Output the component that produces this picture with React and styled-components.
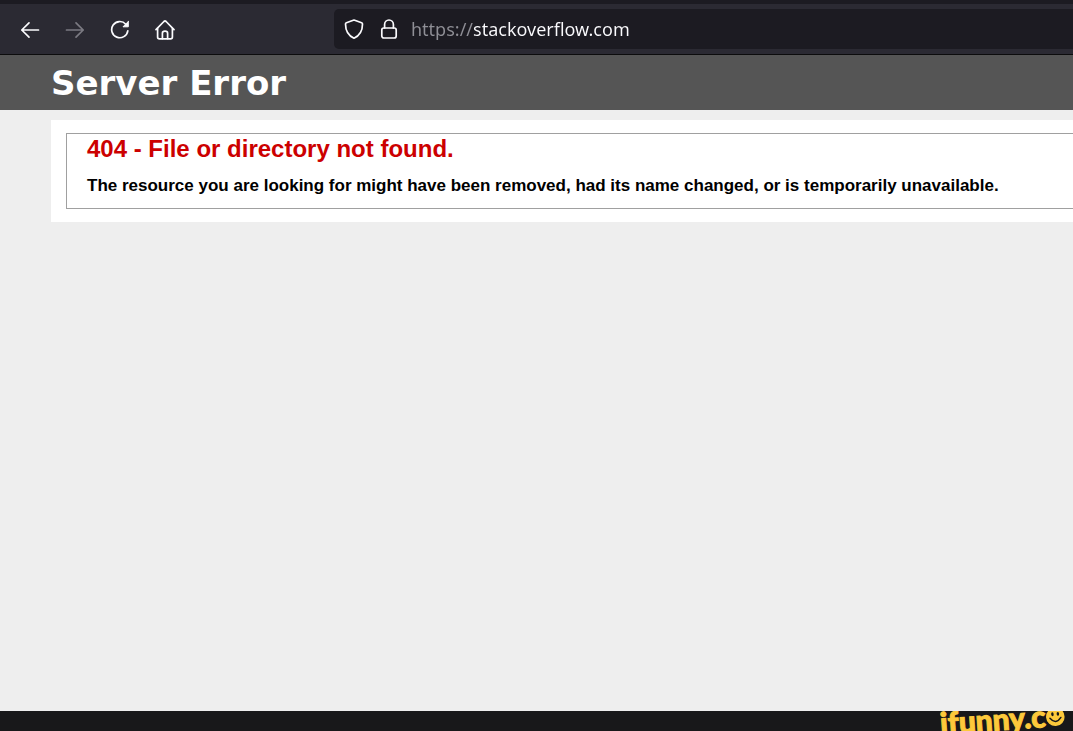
import React from "react";
import styled, { createGlobalStyle } from "styled-components";

const COLORS = {
  tabStrip: "#1c1b22",
  toolbar: "#2b2a33",
  field: "#1c1b22",
  icon: "#fbfbfe",
  header: "#555555",
  page: "#eeeeee",
  error: "#cc0000",
  footer: "#18181a",
  brand: "#fdc93b",
};

const GlobalStyle = createGlobalStyle`
  * {
    box-sizing: border-box;
  }

  body {
    margin: 0;
    background-color: ${COLORS.page};
    font-family: "Liberation Sans", Arial, sans-serif;
  }
`;

const Window = styled.div`
  display: flex;
  flex-direction: column;
  min-height: 100vh;
  overflow: hidden;
`;

const Toolbar = styled.nav`
  display: flex;
  align-items: center;
  padding: 5px 0 5px 7px;
  background-color: ${COLORS.toolbar};
  border-top: 4px solid ${COLORS.tabStrip};
  border-bottom: 1px solid #0c0c0d;
`;

const NavButton = styled.button`
  display: flex;
  align-items: center;
  justify-content: center;
  width: 45px;
  height: 40px;
  padding: 1px 0 0;
  border: none;
  background: none;
  color: ${COLORS.icon};

  &:disabled {
    color: #7b7a82;
  }
`;

const AddressBar = styled.label`
  display: flex;
  align-items: center;
  flex: 1;
  height: 40px;
  margin-left: 147px;
  padding-left: 10px;
  background-color: ${COLORS.field};
  border-radius: 5px 0 0 5px;
  color: ${COLORS.icon};
`;

const Icon = styled.svg`
  display: block;
  flex: none;
  width: 20px;
  height: 20px;
  margin-right: ${(props) => props.$gap || 0}px;
  fill: none;
  stroke: currentColor;
  stroke-width: 1.7;
  stroke-linecap: round;
  stroke-linejoin: round;
`;

/* the protocol is dimmed, the host name is bright */
const AddressInput = styled.input`
  flex: 1;
  min-width: 0;
  height: 28px;
  padding: 0;
  border: none;
  outline: none;
  font-family: "Noto Sans", sans-serif;
  font-size: 18px;
  color: transparent;
  background: linear-gradient(to right, #8f8f96 62px, ${COLORS.icon} 62px);
  background-clip: text;
  -webkit-background-clip: text;
`;

const Header = styled.header`
  padding: 9px 51px 7px;
  background-color: ${COLORS.header};
`;

const Title = styled.h1`
  margin: 0;
  font-family: "DejaVu Sans", Verdana, sans-serif;
  font-size: 34px;
  line-height: 39px;
  color: #ffffff;
`;

const Content = styled.main`
  flex: 1;
  padding: 10px 0 10px 51px;
`;

const Card = styled.div`
  padding: 13px 0 13px 15px;
  background-color: #ffffff;
`;

const Message = styled.section`
  padding: 0 0 11px 20px;
  border: 1px solid #a0a0a0;
  border-right: none;
`;

const ErrorTitle = styled.h2`
  margin: 0 0 10px;
  font-size: 24px;
  line-height: 30px;
  color: ${COLORS.error};
`;

const ErrorText = styled.h3`
  margin: 0;
  font-size: 17px;
  line-height: 23px;
  color: #000000;
`;

const Footer = styled.footer`
  display: flex;
  justify-content: flex-end;
  height: 20px;
  padding-right: 8px;
  overflow: hidden;
  background-color: ${COLORS.footer};
`;

const Brand = styled.div`
  display: flex;
  align-items: flex-start;
  height: 20px;
  font-family: Lato, sans-serif;
  font-size: 30px;
  font-weight: 900;
  line-height: 14px;
  color: ${COLORS.brand};
  -webkit-text-stroke: 1px ${COLORS.brand};
  transform: rotate(-4deg);
`;

const Smile = styled.svg`
  display: block;
  width: 19px;
  height: 19px;
`;

function App() {
  const [url, setUrl] = React.useState("https://stackoverflow.com");

  return (
    <Window>
      <GlobalStyle />
      <Toolbar>
        <NavButton aria-label="Back">
          <Icon viewBox="0 0 20 20">
            <path d="M18.5 10H1.8M9 2.8L1.8 10L9 17.2" />
          </Icon>
        </NavButton>
        <NavButton aria-label="Forward" disabled>
          <Icon viewBox="0 0 20 20">
            <path d="M1.5 10H18.2M11 2.8L18.2 10L11 17.2" />
          </Icon>
        </NavButton>
        <NavButton aria-label="Reload">
          <Icon viewBox="0 0 20 20">
            <path d="M15.8 4.2A8.1 8.1 0 1 0 17.8 10.8" />
            <path
              d="M18.3 1.5V6.8H13L18.3 1.5Z"
              fill="currentColor"
              strokeWidth="1"
            />
          </Icon>
        </NavButton>
        <NavButton aria-label="Home">
          <Icon viewBox="0 0 20 20">
            <path d="M1 9.6L8.9 1.5Q10 0.5 11.1 1.5L19 9.6" />
            <path d="M2.6 8.4V17Q2.6 18.8 4.4 18.8H15.6Q17.4 18.8 17.4 17V8.4" />
            <path d="M7.4 18.6V13.2Q7.4 11.2 10 11.2Q12.6 11.2 12.6 13.2V18.6" />
          </Icon>
        </NavButton>
        <AddressBar>
          <Icon viewBox="0 0 20 20" $gap={15}>
            <path d="M10 1L17.6 3.7Q18.5 4 18.5 5C18.5 12 16 16.5 10 19.2C4 16.5 1.5 12 1.5 5Q1.5 4 2.4 3.7Z" />
          </Icon>
          <Icon viewBox="0 0 20 20" $gap={12}>
            <path d="M5.6 9V5.4A4.4 4.4 0 0 1 14.4 5.4V9" />
            <rect x="2.8" y="9" width="14.4" height="10" rx="2" />
          </Icon>
          <AddressInput
            type="text"
            aria-label="Address"
            spellCheck="false"
            value={url}
            onChange={(e) => setUrl(e.target.value)}
          />
        </AddressBar>
      </Toolbar>

      <Header>
        <Title>Server Error</Title>
      </Header>

      <Content>
        <Card>
          <Message>
            <ErrorTitle>404 - File or directory not found.</ErrorTitle>
            <ErrorText>
              The resource you are looking for might have been removed, had its
              name changed, or is temporarily unavailable.
            </ErrorText>
          </Message>
        </Card>
      </Content>

      <Footer>
        <Brand>
          ifunny.c
          <Smile viewBox="0 0 18 18">
            <circle cx="9" cy="9" r="8.8" fill={COLORS.brand} />
            <ellipse cx="6.4" cy="6.4" rx="1.2" ry="1.8" fill="#18181a" />
            <ellipse cx="11.6" cy="6.4" rx="1.2" ry="1.8" fill="#18181a" />
            <path
              d="M3.8 10Q9 17 14.2 10"
              fill="none"
              stroke="#18181a"
              strokeWidth="1.4"
              strokeLinecap="round"
            />
          </Smile>
        </Brand>
      </Footer>
    </Window>
  );
}

export default App;
